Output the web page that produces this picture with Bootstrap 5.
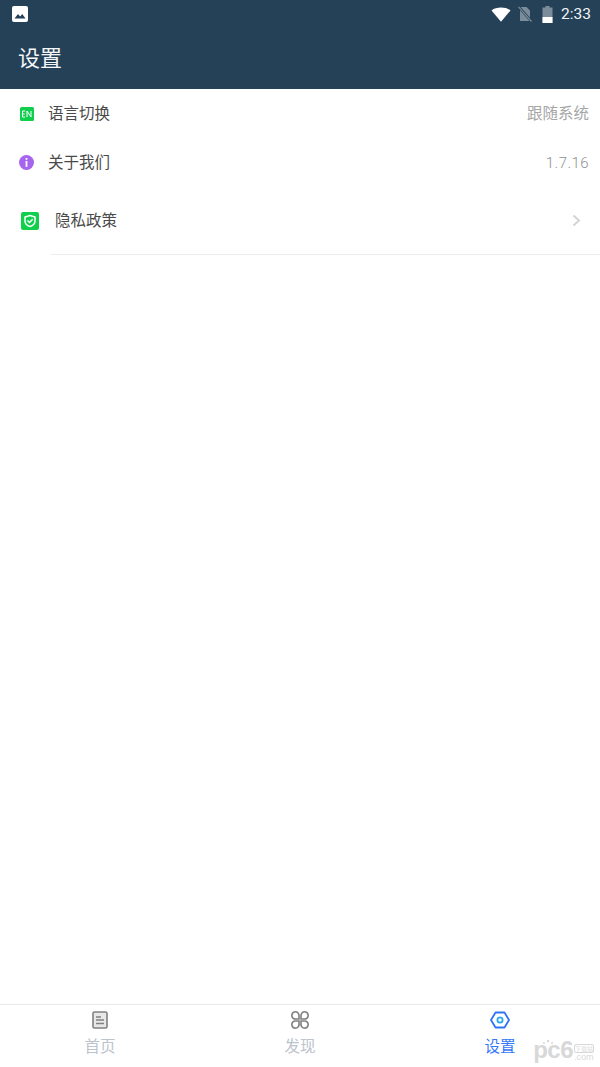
<!DOCTYPE html>
<html>
<head>
  <title>设置</title>
  <link rel="stylesheet" href="https://cdn.jsdelivr.net/npm/bootstrap@5.3.0/dist/css/bootstrap.min.css">
  <style>
    html, body { height: 100%; }
    body { font-family: "Roboto", "Noto Sans CJK SC", sans-serif; background: #fff; width: 600px; height: 1067px; overflow: hidden; }
    .app-shell { height: 1067px; }
    .app-head { background: #254157; height: 89px; color: #fff; }
    .status-row { height: 28px; padding: 0 9px 0 12px; }
    .status-time { font-size: 15.5px; line-height: 28px; font-weight: 400; color: #f2f5f7; margin-left: 8px; }
    .sim-ico { margin: 0 10px 0 7px; }
    .head-title { font-size: 22px; line-height: 30px; padding: 16px 0 0 18px; color: #f4f6f8; }
    .set-row { color: #4a4a4a; font-size: 15.5px; line-height: 24px; }
    .row-lang { height: 49px; padding: 0 11px 0 20px; }
    .row-about { height: 49px; padding: 0 11px 0 19px; }
    .row-privacy { height: 67px; padding: 0 19px 0 21px; }
    .row-label { margin-left: 14px; }
    .row-label-lang { margin-left: 14px; }
    .row-label-privacy { margin-left: 16px; }
    .row-value { color: #a6a6a6; font-size: 15.5px; }
    .row-ver { font-size: 15px; letter-spacing: .45px; font-weight: 300; color: #8f8f8f; }
    .row-rule { height: 1px; background: #ececec; margin-left: 51px; }
    .tab-bar { height: 63px; border-top: 1px solid #e9e9e9; }
    .tab-item { width: 200px; color: #bcc3cc; font-size: 15.5px; line-height: 22px; padding-top: 6px; }
    .tab-on { color: #3478f6; }
    .tab-item svg { display: block; margin-bottom: 7px; }
    .wm-mark { right: 6px; bottom: 5px; color: #d8d8d8; font-family: "Liberation Sans", sans-serif; font-weight: 700; line-height: 1; }
    .wm-big { font-size: 24px; letter-spacing: -.5px; }
    .wm-dots { left: 9px; top: 1px; }
    .wm-side { font-size: 9px; line-height: 9px; margin-left: 1px; font-weight: 400; }
    .wm-box { display: block; border: 1px solid #d8d8d8; border-radius: 2px; font-size: 6px; line-height: 7px; font-weight: 400; text-align: center; font-family: "Noto Sans CJK SC", sans-serif; }
  </style>
</head>
<body>
  <div class="app-shell d-flex flex-column position-relative">
    <header class="app-head flex-shrink-0">
      <div class="status-row d-flex align-items-center">
        <svg width="16" height="16" viewBox="0 0 16 16"><rect width="16" height="16" rx="2" fill="#fff"/><path d="M2.5 12.5 6 8l2.2 2.6L10.2 8l3.3 4.5z" fill="#254157"/></svg>
        <div class="ms-auto d-flex align-items-center">
          <svg width="20" height="15" viewBox="0 0 20 15"><path d="M0.5 3.5C3 1.3 6.3.5 10 .5s7 .8 9.5 3L10 14.8z" fill="#fff"/></svg>
          <svg width="14" height="16" viewBox="0 0 14 16" class="sim-ico"><path d="M2 1h6.500L12 4.500V15H2z" fill="#7b8d9b"/><path d="M0 0l14 16" stroke="#254157" stroke-width="2.600"/><path d="M.5 .8l13 14.700" stroke="#7b8d9b" stroke-width="1.200"/></svg>
          <svg width="11" height="17" viewBox="0 0 11 17"><path d="M3.500 0h4v1.500H10.500V17H.5V1.500h3z" fill="#7b8d9b"/><rect x=".5" y="11" width="10" height="6" fill="#fff"/></svg>
          <span class="status-time">2:33</span>
        </div>
      </div>
      <div class="head-title">设置</div>
    </header>

    <main class="flex-grow-1">
      <div class="set-row row-lang d-flex align-items-center">
        <svg width="14" height="14" viewBox="0 0 14 14"><rect width="14" height="14" rx="1.500" fill="#0fcf4c"/><path d="M2.500 4h2.600M2.500 7h2.200M2.500 10h2.600M2.500 4v6M7 10V4l4 6V4" fill="none" stroke="#fff" stroke-width="1"/></svg>
        <span class="row-label row-label-lang">语言切换</span>
        <span class="row-value ms-auto">跟随系统</span>
      </div>
      <div class="set-row row-about d-flex align-items-center">
        <svg width="15" height="15" viewBox="0 0 15 15"><circle cx="7.500" cy="7.500" r="7.500" fill="#a765ef"/><rect x="6.600" y="3" width="1.800" height="1.800" fill="#fff"/><rect x="6.600" y="6" width="1.800" height="5.800" fill="#fff"/></svg>
        <span class="row-label">关于我们</span>
        <span class="row-value row-ver ms-auto">1.7.16</span>
      </div>
      <div class="set-row row-privacy d-flex align-items-center">
        <svg width="18" height="18" viewBox="0 0 18 18"><rect width="18" height="18" rx="2" fill="#0fcf4c"/><path d="M9 3.500l5 1.500v4c0 3-2.300 4.700-5 5.500-2.700-.8-5-2.500-5-5.500V5z" fill="none" stroke="#fff" stroke-width="1.500"/><path d="M6.500 8.500L8.500 10.500 11.700 7.300" fill="none" stroke="#fff" stroke-width="1.500"/></svg>
        <span class="row-label row-label-privacy">隐私政策</span>
        <svg class="ms-auto" width="9" height="13" viewBox="0 0 9 13"><path d="M1.500 1.500L7 6.500 1.500 11.500" fill="none" stroke="#d4d4d4" stroke-width="2"/></svg>
      </div>
      <div class="row-rule"></div>
    </main>

    <nav class="tab-bar flex-shrink-0 d-flex">
      <div class="tab-item d-flex flex-column align-items-center">
        <svg width="16" height="18" viewBox="0 0 16 18"><rect x="1" y="1" width="14" height="16" rx="1.500" fill="#e8e8e8" stroke="#808080" stroke-width="1.600"/><path d="M4 6h5M4 9h8M4 12.500h8" stroke="#808080" stroke-width="1.400"/></svg>
        <span>首页</span>
      </div>
      <div class="tab-item d-flex flex-column align-items-center">
        <svg width="18" height="18" viewBox="0 0 18 18"><path d="M8 8H4.600A3.600 3.600 0 1 1 8 4.600ZM10 8h3.400A3.600 3.600 0 1 0 10 4.600ZM8 10H4.600A3.600 3.600 0 1 0 8 13.400ZM10 10h3.400A3.600 3.600 0 1 1 10 13.400Z" fill="none" stroke="#808080" stroke-width="1.600"/></svg>
        <span>发现</span>
      </div>
      <div class="tab-item tab-on d-flex flex-column align-items-center">
        <svg width="20" height="18" viewBox="0 0 20 18"><path d="M5.500 1.500h9L19 9l-4.500 7.500h-9L1 9z" fill="none" stroke="#2f75f5" stroke-width="1.800" stroke-linejoin="round"/><circle cx="10" cy="9" r="2.600" fill="none" stroke="#29a8f2" stroke-width="1.800"/></svg>
        <span>设置</span>
      </div>
    </nav>

    <div class="wm-mark position-absolute d-flex align-items-end">
      <svg class="wm-dots position-absolute" width="12" height="6" viewBox="0 0 12 6"><g fill="#d8d8d8"><circle cx="2" cy="4" r="1"/><circle cx="6" cy="2" r="1.200"/><circle cx="10" cy="4" r="1"/></g></svg>
      <span class="wm-big">pc6</span>
      <span class="wm-side"><span class="wm-box">下载站</span>.com</span>
    </div>
  </div>
  <script src="https://cdn.jsdelivr.net/npm/bootstrap@5.3.0/dist/js/bootstrap.bundle.min.js"></script>
</body>
</html>
